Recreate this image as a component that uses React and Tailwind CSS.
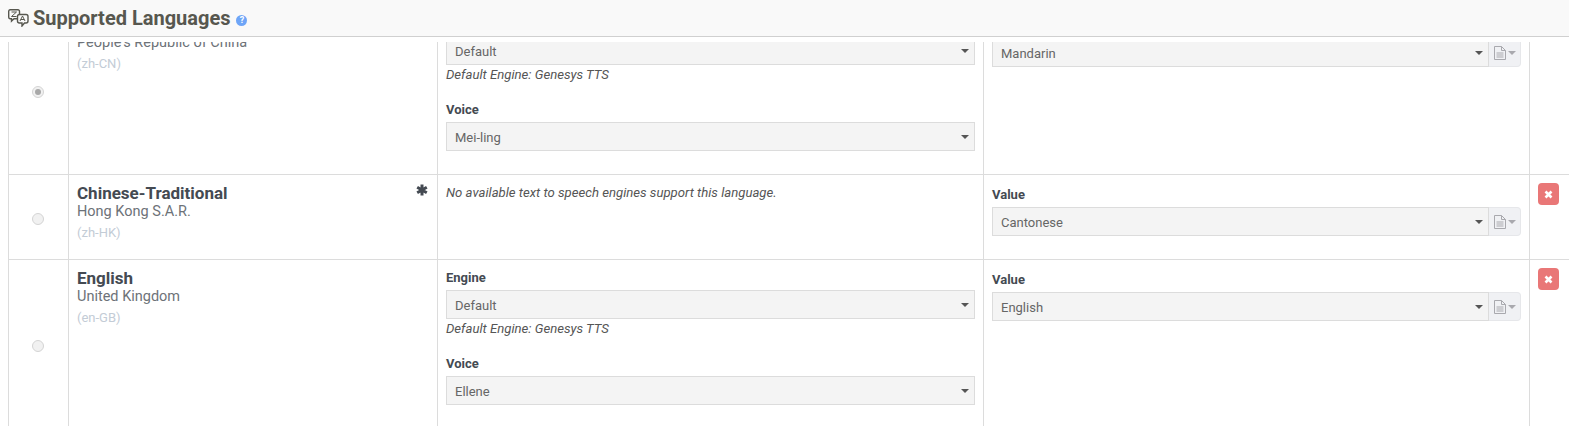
import React from 'react';

const Caret = () => <span className="w-0 h-0 border-x-[4px] border-x-transparent border-t-[4px] border-t-[#555]" />;

const Select = ({ value }) => (
  <div className="h-[29px] flex items-center justify-between pl-2 pr-[5px] bg-[#f4f4f4] border border-[#dcdcdc] text-[13px] text-[#666]">
    <span className="pt-[2px]">{value}</span>
    <Caret />
  </div>
);

const Label = ({ children }) => <div className="text-[13px] leading-[15px] font-bold text-[#444a52] mb-[5px]">{children}</div>;

const Radio = ({ checked }) => (
  <span className="mt-[3px] mr-[1px] w-3 h-3 rounded-full border border-[#d4d4d4] bg-[#f1f1f1] flex items-center justify-center">
    {checked && <span className="w-1.5 h-1.5 rounded-full bg-[#a8a8a8]" />}
  </span>
);

const Remove = () => (
  <button className="w-[21px] h-[22px] rounded-sm bg-[#e97777] flex items-center justify-center">
    <svg width="9" height="9" viewBox="0 0 9 9">
      <path d="M1.5 1.5L7.5 7.5M7.5 1.5L1.5 7.5" stroke="#fff" strokeWidth="2.6" />
    </svg>
  </button>
);

const ValueField = ({ value }) => (
  <>
    <Label>Value</Label>
    <div className="flex w-[529px]">
      <div className="flex-1">
        <Select value={value} />
      </div>
      <div className="w-[32px] h-[29px] flex items-center justify-center gap-[2px] bg-[#f0f1f4] border border-l-0 border-[#e6e7ea] rounded-r-sm">
        <svg width="12" height="14" viewBox="0 0 12 14" fill="none" stroke="#a9a9ae">
          <path d="M.5.5h7l4 4v9H.5zM7.5.5v4h4M2.5 7h7M2.5 9h7M2.5 11h7" />
        </svg>
        <span className="w-0 h-0 border-x-[4px] border-x-transparent border-t-[4px] border-t-[#a9a9ae]" />
      </div>
    </div>
  </>
);

const Engine = ({ voice }) => (
  <>
    <Label>Engine</Label>
    <Select value="Default" />
    <div className="mt-[3px] text-[13.15px] leading-[14px] italic text-[#555]">Default Engine: Genesys TTS</div>
    <div className="mt-[20px]">
      <Label>Voice</Label>
      <Select value={voice} />
    </div>
  </>
);

const rows = [
  { name: 'Chinese-Simplified', region: "People's Republic of China", code: '(zh-CN)', voice: 'Mei-ling', value: 'Mandarin', checked: true },
  { name: 'Chinese-Traditional', region: 'Hong Kong S.A.R.', code: '(zh-HK)', value: 'Cantonese', star: true, noTts: true, remove: true },
  { name: 'English', region: 'United Kingdom', code: '(en-GB)', voice: 'Ellene', value: 'English', remove: true },
];

const Row = ({ row }) => (
  <div className={`grid grid-cols-[60px_369px_546px_546px_1fr] border-b border-[#dcdcdc] ${row.noTts ? 'h-[85px]' : 'h-[169px]'}`}>
    <div className="border-l border-[#dcdcdc] flex items-center justify-center">
      <Radio checked={row.checked} />
    </div>
    <div className="relative border-l border-[#dcdcdc] pl-2 pt-[8px]">
      <div className="text-[17px] leading-[20px] font-bold text-[#444a52]">{row.name}</div>
      <div className="mt-[1px] text-[14.5px] leading-[16px] text-[#6d7278]">{row.region}</div>
      <div className="mt-[3px] text-[13px] leading-[20px] text-[#c3ccd6]">{row.code}</div>
      {row.star && (
        <svg className="absolute right-[9px] top-[9px]" width="12" height="12" viewBox="0 0 12 12" stroke="#444a52" strokeWidth="3">
          <path d="M6 .5v11M1.2 3.250l9.600 5.500M10.800 3.250l-9.600 5.500" />
        </svg>
      )}
    </div>
    <div className="border-l border-[#dcdcdc] pl-2 pr-2 pt-[10px]">
      {row.noTts ? (
        <div className="text-[13.15px] leading-[15px] italic text-[#555]">No available text to speech engines support this language.</div>
      ) : (
        <Engine voice={row.voice} />
      )}
    </div>
    <div className="border-l border-[#dcdcdc] pl-2 pt-[12px]">
      <ValueField value={row.value} />
    </div>
    <div className="border-l border-[#dcdcdc] pl-[8px] pt-[8px]">{row.remove && <Remove />}</div>
  </div>
);

export default function App() {
  return (
    <div className="w-[1569px] h-[426px] overflow-hidden bg-white font-['Roboto',sans-serif]">
      <div className="h-[37px] flex items-center pl-[8px] bg-[#f9f9f9] border-b border-[#d0d0d0]">
        <svg width="21" height="18" viewBox="0 0 21 18" fill="none" stroke="#57574f" strokeWidth="1.4">
          <path d="M2 .8h8a1.5 1.5 0 0 1 1.5 1.5v6A1.5 1.5 0 0 1 10 9.800H6l-2.500 2.400V9.800H2A1.500 1.500 0 0 1 .7 8.300v-6A1.500 1.500 0 0 1 2 .8z" />
          <path fill="#f9f9f9" d="M11.500 5.500h6.500a2 2 0 0 1 2 2v4.500a2 2 0 0 1-2 2h-1.500l-2.500 3v-3h-2.500a2 2 0 0 1-2-2V7.500a2 2 0 0 1 2-2z" />
          <path d="M3.500 3h5L3.500 7.500h5M12 12l2.500-5 2.500 5M12.800 10.500h3.400" strokeWidth="1" />
        </svg>
        <h1 className="ml-[4px] text-[20px] font-bold text-[#57574f]">Supported Languages</h1>
        <span className="ml-[6px] mt-[4px] w-[11px] h-[11px] rounded-full bg-[#6ea5f7] text-white text-[9px] leading-[11px] font-bold text-center">?</span>
      </div>
      <div className="pt-[5px] pl-[8px]">
        <div className="h-[384px] overflow-hidden">
          <div className="-mt-[36px]">
            {rows.map((row) => (
              <Row key={row.name} row={row} />
            ))}
          </div>
        </div>
      </div>
    </div>
  );
}
